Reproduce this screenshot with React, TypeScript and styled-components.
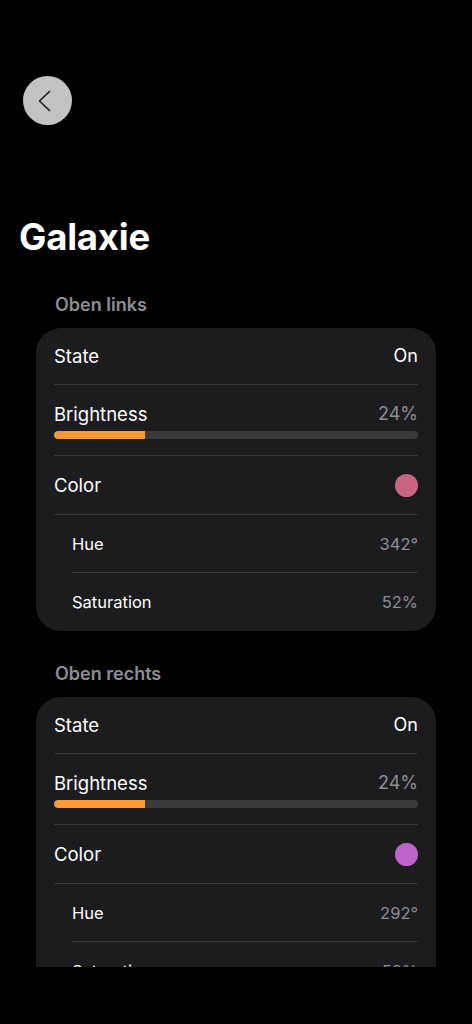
import React from "react";
import styled, { createGlobalStyle } from "styled-components";

const GlobalStyle = createGlobalStyle`
  html, body { margin: 0; padding: 0; background: #000; }
  body { font-family: Inter, "Noto Sans", "Liberation Sans", sans-serif; color: #fff; -webkit-font-smoothing: antialiased; }
  * { box-sizing: border-box; }
`;

const Page = styled.div`
  width: 472px;
  height: 1024px;
  background: #000;
  display: flex;
  flex-direction: column;
`;

const Scroll = styled.div`
  height: 967px;
  overflow: hidden;
  display: flex;
  flex-direction: column;
`;

const TopBar = styled.div`
  padding: 76px 0 0 23px;
  height: 125px;
`;

const BackButton = styled.button`
  width: 49px;
  height: 49px;
  border-radius: 50%;
  background: #c3c3c3;
  border: none;
  padding: 0;
  display: flex;
  align-items: center;
  justify-content: center;
`;

const Title = styled.h1`
  margin: 89px 0 0 19px;
  font-size: 36.5px;
  font-weight: 700;
  line-height: 46px;
  letter-spacing: -0.2px;
`;

const Section = styled.section<{ $top: number }>`
  padding: 0 36px;
  margin-top: ${(p) => p.$top}px;
`;

const SectionHeader = styled.h2`
  margin: 0 0 12px 19px;
  font-size: 18px;
  font-weight: 600;
  line-height: 22px;
  color: #8d8d92;
`;

const Card = styled.div`
  background: #1c1c1e;
  border-radius: 25px;
  padding: 0 18px;
`;

const Row = styled.div<{ $indent?: boolean; $height: number; $last?: boolean }>`
  margin-left: ${(p) => (p.$indent ? "18px" : "0")};
  height: ${(p) => p.$height}px;
  border-bottom: ${(p) => (p.$last ? "none" : "1px solid #38383a")};
  display: flex;
  flex-direction: column;
  justify-content: center;
`;

const Line = styled.div`
  display: flex;
  align-items: center;
  justify-content: space-between;
`;

const Label = styled.span<{ $small?: boolean }>`
  font-size: ${(p) => (p.$small ? "16.5px" : "18.5px")};
  color: #fff;
  line-height: 24px;
`;

const Value = styled.span<{ $muted?: boolean; $small?: boolean }>`
  font-size: ${(p) => (p.$small ? "16.5px" : "18px")};
  color: ${(p) => (p.$muted ? "#8d8d92" : "#fff")};
  line-height: 24px;
`;

const Track = styled.div`
  margin-top: 5px;
  height: 8px;
  border-radius: 4px;
  background: #3a3a3c;
  overflow: hidden;
`;

const Fill = styled.div`
  height: 100%;
  background: #ff9a30;
  border-radius: 4px 0 0 4px;
`;

const Dot = styled.span<{ $color: string }>`
  width: 23px;
  height: 23px;
  border-radius: 50%;
  background: ${(p) => p.$color};
`;

type Light = {
  name: string;
  state: string;
  brightness: number;
  hue: number;
  saturation: number;
  color: string;
};

const lights: Light[] = [
  { name: "Oben links", state: "On", brightness: 24, hue: 342, saturation: 52, color: "#c96482" },
  { name: "Oben rechts", state: "On", brightness: 24, hue: 292, saturation: 52, color: "#bf62cc" },
];

function LightCard({ light }: { light: Light }) {
  return (
    <Card>
      <Row $height={57}>
        <Line>
          <Label>State</Label>
          <Value>{light.state}</Value>
        </Line>
      </Row>
      <Row $height={71}>
        <Line>
          <Label>Brightness</Label>
          <Value $muted>{light.brightness}%</Value>
        </Line>
        <Track>
          <Fill style={{ width: `${light.brightness + 1}%` }} />
        </Track>
      </Row>
      <Row $height={59}>
        <Line>
          <Label>Color</Label>
          <Dot $color={light.color} />
        </Line>
      </Row>
      <Row $indent $height={58}>
        <Line>
          <Label $small>Hue</Label>
          <Value $muted $small>{light.hue}°</Value>
        </Line>
      </Row>
      <Row $indent $height={58} $last>
        <Line>
          <Label $small>Saturation</Label>
          <Value $muted $small>{light.saturation}%</Value>
        </Line>
      </Row>
    </Card>
  );
}

export default function App() {
  return (
    <>
      <GlobalStyle />
      <Page>
        <Scroll>
          <TopBar>
            <BackButton aria-label="Back">
              <svg width="22" height="22" viewBox="0 0 22 22" fill="none" style={{ marginLeft: -3 }}>
                <path d="M14.5 1.5 L4.5 11 L14.5 20.5" stroke="#1a1a1a" strokeWidth="1.6" strokeLinecap="round" strokeLinejoin="round" />
              </svg>
            </BackButton>
          </TopBar>
          <Title>Galaxie</Title>
          {lights.map((l, i) => (
            <Section key={l.name} $top={i === 0 ? 34 : 32}>
              <SectionHeader>{l.name}</SectionHeader>
              <LightCard light={l} />
            </Section>
          ))}
        </Scroll>
      </Page>
    </>
  );
}
